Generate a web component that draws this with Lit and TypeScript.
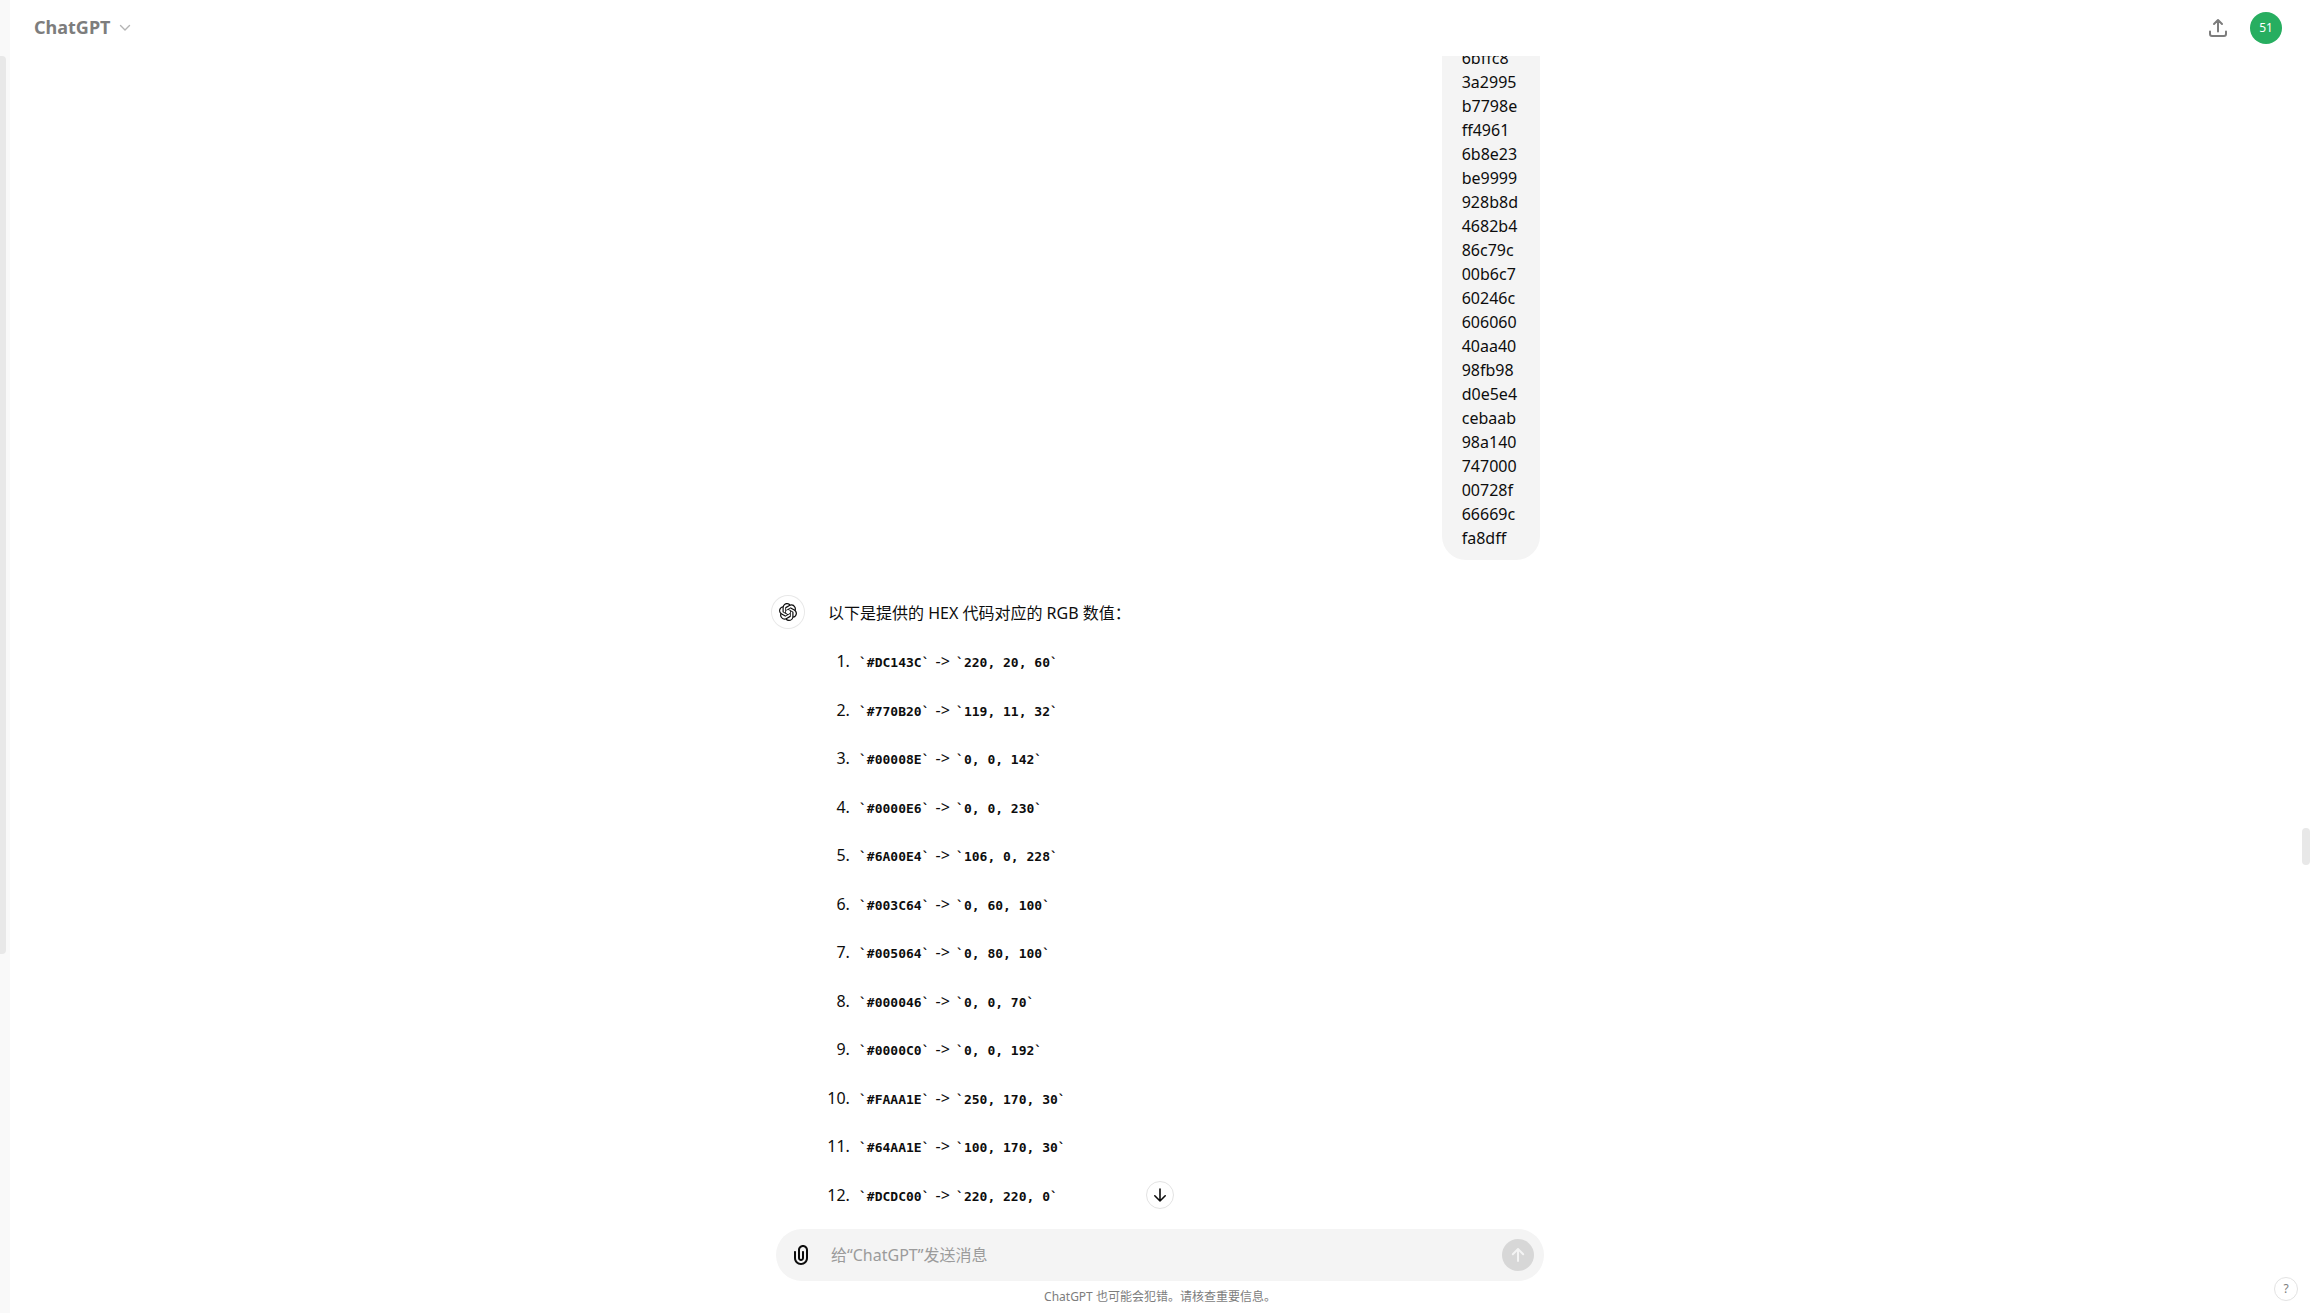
import { LitElement, html, css, svg } from "lit";
import { customElement, query } from "lit/decorators.js";

const userLines = [
  "6bffc8", "3a2995", "b7798e", "ff4961", "6b8e23", "be9999", "928b8d",
  "4682b4", "86c79c", "00b6c7", "60246c", "606060", "40aa40", "98fb98",
  "d0e5e4", "cebaab", "98a140", "747000", "00728f", "66669c", "fa8dff",
];

const colors: [string, string][] = [
  ["#DC143C", "220, 20, 60"],
  ["#770B20", "119, 11, 32"],
  ["#00008E", "0, 0, 142"],
  ["#0000E6", "0, 0, 230"],
  ["#6A00E4", "106, 0, 228"],
  ["#003C64", "0, 60, 100"],
  ["#005064", "0, 80, 100"],
  ["#000046", "0, 0, 70"],
  ["#0000C0", "0, 0, 192"],
  ["#FAAA1E", "250, 170, 30"],
  ["#64AA1E", "100, 170, 30"],
  ["#DCDC00", "220, 220, 0"],
];

const logo = svg`<path fill="currentColor" d="M22.2819 9.8211a5.9847 5.9847 0 0 0-.5157-4.9108 6.0462 6.0462 0 0 0-6.5098-2.9A6.0651 6.0651 0 0 0 4.9807 4.1818a5.9847 5.9847 0 0 0-3.9977 2.9 6.0462 6.0462 0 0 0 .7427 7.0966 5.98 5.98 0 0 0 .511 4.9107 6.051 6.051 0 0 0 6.5146 2.9001A5.9847 5.9847 0 0 0 13.2599 24a6.0557 6.0557 0 0 0 5.7718-4.2058 5.9894 5.9894 0 0 0 3.9977-2.9001 6.0557 6.0557 0 0 0-.7475-7.0729zm-9.022 12.6081a4.4755 4.4755 0 0 1-2.8764-1.0408l.1419-.0804 4.7783-2.7582a.7948.7948 0 0 0 .3927-.6813v-6.7369l2.02 1.1686a.071.071 0 0 1 .038.052v5.5826a4.504 4.504 0 0 1-4.4945 4.4944zm-9.6607-4.1254a4.4708 4.4708 0 0 1-.5346-3.0137l.142.0852 4.783 2.7582a.7712.7712 0 0 0 .7806 0l5.8428-3.3685v2.3324a.0804.0804 0 0 1-.0332.0615L9.74 19.9502a4.4992 4.4992 0 0 1-6.1408-1.6464zM2.3408 7.8956a4.485 4.485 0 0 1 2.3655-1.9728V11.6a.7664.7664 0 0 0 .3879.6765l5.8144 3.3543-2.0201 1.1685a.0757.0757 0 0 1-.071 0l-4.8303-2.7865A4.504 4.504 0 0 1 2.3408 7.872zm16.5963 3.8558L13.1038 8.364 15.1192 7.2a.0757.0757 0 0 1 .071 0l4.8303 2.7913a4.4944 4.4944 0 0 1-.6765 8.1042v-5.6772a.79.79 0 0 0-.407-.667zm2.0107-3.0231l-.142-.0852-4.7735-2.7818a.7759.7759 0 0 0-.7854 0L9.409 9.2297V6.8974a.0662.0662 0 0 1 .0284-.0615l4.8303-2.7866a4.4992 4.4992 0 0 1 6.6802 4.66zM8.3065 12.863l-2.02-1.1638a.0804.0804 0 0 1-.038-.0567V6.0742a4.4992 4.4992 0 0 1 7.3757-3.4537l-.142.0805L8.704 5.459a.7948.7948 0 0 0-.3927.6813zm1.0976-2.3654l2.602-1.4998 2.6069 1.4998v2.9994l-2.5974 1.4997-2.6067-1.4997Z"/>`;

const clip = svg`<path fill="currentColor" fill-rule="evenodd" d="M9 7C9 4.23858 11.2386 2 14 2C16.7614 2 19 4.23858 19 7V15C19 18.866 15.866 22 12 22C8.13401 22 5 18.866 5 15V9C5 8.44772 5.44772 8 6 8C6.55228 8 7 8.44772 7 9V15C7 17.7614 9.23858 20 12 20C14.7614 20 17 17.7614 17 15V7C17 5.34315 15.6569 4 14 4C12.3431 4 11 5.34315 11 7V15C11 15.5523 11.4477 16 12 16C12.5523 16 13 15.5523 13 15V9C13 8.44772 13.4477 8 14 8C14.5523 8 15 8.44772 15 9V15C15 16.6569 13.6569 18 12 18C10.3431 18 9 16.6569 9 15V7Z"/>`;

@customElement("app-root")
export class AppRoot extends LitElement {
  static styles = css`
    :host {
      display: flex;
      height: 100vh;
      overflow: hidden;
      background: #fff;
      color: #0d0d0d;
      font: 16px/24px "Noto Sans", "Noto Sans CJK SC", sans-serif;
    }
    * { box-sizing: border-box; }
    svg { display: block; }
    button {
      display: flex;
      align-items: center;
      justify-content: center;
      border: 0;
      padding: 0;
      background: none;
      color: inherit;
      font: inherit;
      cursor: pointer;
    }

    .sidebar {
      flex: none;
      width: 10px;
      padding-top: 56px;
      background: #f9f9f9;
    }
    .sidebar-thumb {
      width: 6px;
      height: 73%;
      max-height: 898px;
      border-radius: 0 4px 4px 0;
      background: #e8e8e8;
    }

    .main {
      position: relative;
      display: flex;
      flex: 1;
      flex-direction: column;
      min-width: 0;
    }
    .header {
      display: flex;
      flex: none;
      align-items: center;
      justify-content: space-between;
      height: 56px;
      padding: 0 28px 0 24px;
    }
    .model {
      gap: 8px;
      padding-bottom: 2px;
      color: #7d7d7d;
      font-size: 18px;
      font-weight: 700;
      line-height: 28px;
    }
    .chevron { color: #b4b4b4; }
    .actions {
      display: flex;
      align-items: center;
      gap: 20px;
      color: #7d7d7d;
    }
    .account {
      width: 32px;
      height: 32px;
      border-radius: 50%;
      background: #27ae60;
      color: #fff;
      font-size: 12px;
    }

    .viewport {
      position: relative;
      display: flex;
      flex: 1;
      min-height: 0;
    }
    .scroller {
      flex: 1;
      overflow-y: auto;
      padding: 0 8px 48px 0;
      scrollbar-width: none;
    }
    .thumb {
      position: absolute;
      right: 0;
      top: 772px;
      width: 8px;
      height: 37px;
      border-radius: 4px;
      background: #e8e8e8;
    }
    .thread {
      display: flex;
      flex-direction: column;
      gap: 36px;
      max-width: 768px;
      margin: 0 auto;
    }
    .bubble {
      align-self: flex-end;
      padding: 10px 22px 10px 20px;
      border-radius: 0 0 24px 24px;
      background: #f4f4f4;
    }
    .reply {
      display: flex;
      gap: 24px;
    }
    .avatar {
      display: flex;
      flex: none;
      align-items: center;
      justify-content: center;
      width: 32px;
      height: 32px;
      border-radius: 50%;
      box-shadow: 0 0 0 1px #e8e8e8;
    }
    .answer {
      padding-top: 3px;
      line-height: 28px;
    }
    .intro { margin: 0; }
    .list {
      margin: 20px 0 0;
      padding: 0 0 0 26px;
    }
    .item {
      height: 48px;
      padding-left: 5px;
    }
    .item:nth-child(odd) { height: 49px; }
    .code {
      font-family: "DejaVu Sans Mono", monospace;
      font-size: 13px;
      font-weight: 700;
    }
    .code::before, .code::after { content: "\`"; }
    .arrow { margin: 0 2px; }

    .jump {
      position: absolute;
      left: 50%;
      bottom: 20px;
      width: 28px;
      height: 28px;
      margin-left: -14px;
      border: 1px solid #e3e3e3;
      border-radius: 50%;
      background: #fff;
    }
    .dock {
      flex: none;
      padding: 0 16px;
    }
    .composer {
      display: flex;
      align-items: center;
      max-width: 768px;
      height: 52px;
      margin: 0 auto;
      padding: 0 10px 0 13px;
      border-radius: 26px;
      background: #f4f4f4;
    }
    .prompt {
      flex: 1;
      min-width: 0;
      height: 24px;
      margin: 0 16px 0 18px;
      padding: 0;
      border: 0;
      outline: 0;
      background: none;
      color: inherit;
      font: inherit;
    }
    .prompt::placeholder { color: #9b9b9b; opacity: 1; }
    .send {
      width: 32px;
      height: 32px;
      border-radius: 50%;
      background: #d7d7d7;
      color: #f4f4f4;
    }
    .note {
      margin: 0;
      padding: 8px 0;
      color: #7d7d7d;
      font-size: 12px;
      line-height: 16px;
      text-align: center;
    }
    .help {
      position: absolute;
      right: 12px;
      bottom: 12px;
      width: 24px;
      height: 24px;
      border: 1px solid #e3e3e3;
      border-radius: 50%;
      background: #fff;
      color: #7d7d7d;
      font-size: 12px;
    }
  `;

  @query(".scroller") private scroller!: HTMLElement;

  firstUpdated() {
    this.scroller.scrollTop = 20;
  }

  render() {
    return html`
      <aside class="sidebar"><div class="sidebar-thumb"></div></aside>
      <main class="main">
        <header class="header">
          <button class="model">
            ChatGPT
            <svg class="chevron" width="14" height="14" viewBox="0 0 14 14" fill="none" stroke="currentColor" stroke-width="1.4" stroke-linecap="round" stroke-linejoin="round"><path d="M2.5 5.5 7 10l4.500-4.500"/></svg>
          </button>
          <div class="actions">
            <button aria-label="分享">
              <svg width="24" height="24" viewBox="0 0 24 24" fill="none" stroke="currentColor" stroke-width="2" stroke-linecap="round" stroke-linejoin="round"><path d="M12 15.500V4M8 8l4-4 4 4M4 15.500V18a2 2 0 0 0 2 2h12a2 2 0 0 0 2-2v-2.500"/></svg>
            </button>
            <button class="account">51</button>
          </div>
        </header>
        <section class="viewport">
          <div class="scroller">
            <div class="thread">
              <div class="bubble">${userLines.map((l) => html`<div>${l}</div>`)}</div>
              <article class="reply">
                <div class="avatar"><svg width="18" height="18" viewBox="0 0 24 24">${logo}</svg></div>
                <div class="answer">
                  <p class="intro">以下是提供的 HEX 代码对应的 RGB 数值：</p>
                  <ol class="list">
                    ${colors.map(([hex, rgb]) => html`<li class="item"><code class="code">${hex}</code><span class="arrow"> -&gt; </span><code class="code">${rgb}</code></li>`)}
                  </ol>
                </div>
              </article>
            </div>
          </div>
          <div class="thumb"></div>
          <button class="jump" aria-label="滚动到底部">
            <svg width="18" height="18" viewBox="0 0 18 18" fill="none" stroke="currentColor" stroke-width="1.600" stroke-linecap="round" stroke-linejoin="round"><path d="M9 3v12M3.800 9.800 9 15l5.200-5.200"/></svg>
          </button>
        </section>
        <footer class="dock">
          <form class="composer" @submit=${(e: Event) => e.preventDefault()}>
            <button type="button" aria-label="附件"><svg width="24" height="24" viewBox="0 0 24 24">${clip}</svg></button>
            <input class="prompt" type="text" aria-label="消息" placeholder="给“ChatGPT”发送消息" />
            <button class="send" aria-label="发送">
              <svg width="20" height="20" viewBox="0 0 20 20" fill="none" stroke="currentColor" stroke-width="2" stroke-linecap="round" stroke-linejoin="round"><path d="M10 16V4M4.800 9.200 10 4l5.200 5.200"/></svg>
            </button>
          </form>
          <p class="note">ChatGPT 也可能会犯错。请核查重要信息。</p>
        </footer>
        <button class="help" aria-label="帮助">?</button>
      </main>
    `;
  }
}
